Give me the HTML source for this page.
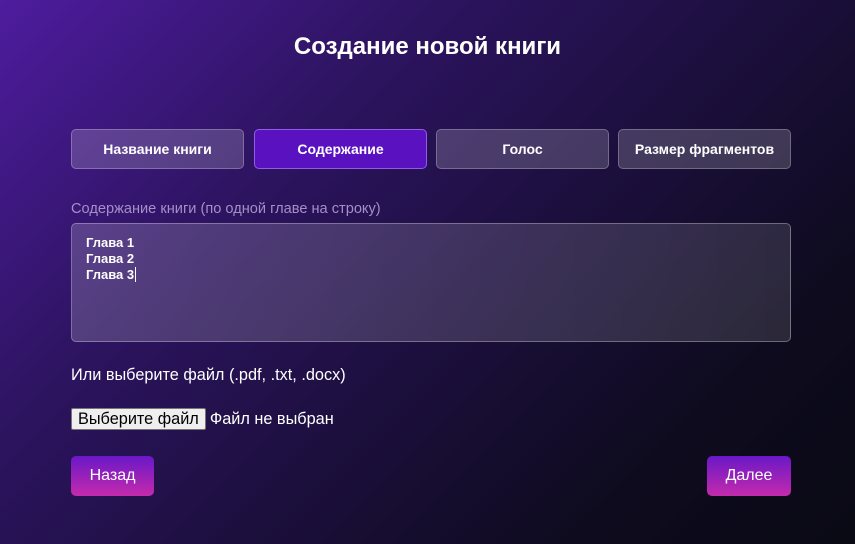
<!DOCTYPE html>
<html><head><meta charset="utf-8"><style>
html,body{margin:0;padding:0}
body{width:855px;height:544px;overflow:hidden;position:relative;font-family:"Liberation Sans","DejaVu Sans",sans-serif;color:#fff;
background:linear-gradient(135deg,#4e1c9e 0%,#2e1462 30%,#1c0f3e 55%,#0e0b1e 80%,#0a0a14 100%);}
h1{position:absolute;top:33px;left:0;width:855px;text-align:center;margin:0;font-size:24px;font-weight:bold}
.tab{position:absolute;top:129px;border:1px solid rgba(255,255,255,0.25);border-radius:5px;background:rgba(255,255,255,0.18);font-size:14px;font-weight:bold;display:flex;align-items:center;justify-content:center;box-sizing:border-box;width:173px;height:40px}
.tab.act{background:#5a12c0;border-color:rgba(180,140,255,0.6)}
.lbl{position:absolute;left:71px;top:201px;font-size:14.6px;color:#a58fc8}
.ta{position:absolute;left:71px;top:223px;width:720px;height:119px;box-sizing:border-box;border:1px solid rgba(255,255,255,0.3);border-radius:5px;background:linear-gradient(90deg,rgba(255,255,255,0.18),rgba(255,255,255,0.12));padding:11px 14px;font-size:13px;font-weight:bold;line-height:16px}
.or{position:absolute;left:71px;top:366px;font-size:16.3px}
.file{position:absolute;left:71px;top:408px;font-size:16.3px;display:flex;align-items:center}
.fb{background:#efefef;color:#000;border:1px solid #767676;border-radius:2px;padding:1px 6px;font-size:16.3px;margin-right:4px;height:22px;box-sizing:border-box;line-height:18px}
.btn{position:absolute;top:456px;height:40px;border-radius:5px;background:linear-gradient(180deg,#6a18c8,#c42aac);font-size:16px;display:flex;align-items:center;justify-content:center}
</style></head><body>
<h1>Создание новой книги</h1>
<div class="tab" style="left:71px">Название книги</div>
<div class="tab act" style="left:254px">Содержание</div>
<div class="tab" style="left:436px">Голос</div>
<div class="tab" style="left:618px">Размер фрагментов</div>
<div class="lbl">Содержание книги (по одной главе на строку)</div>
<div class="ta">Глава 1<br>Глава 2<br>Глава 3<span style="border-left:1px solid #fff;margin-left:1px"></span></div>
<div class="or">Или выберите файл (.pdf, .txt, .docx)</div>
<div class="file"><span class="fb">Выберите файл</span>Файл не выбран</div>
<div class="btn" style="left:71px;width:83px">Назад</div>
<div class="btn" style="left:707px;width:84px">Далее</div>
</body></html>
